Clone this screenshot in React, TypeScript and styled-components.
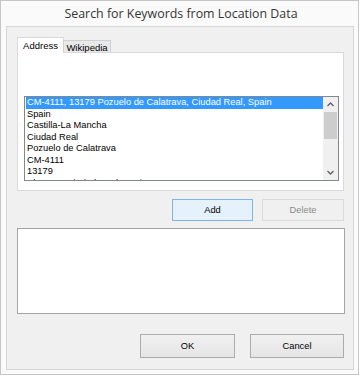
import React from 'react';
import styled, { createGlobalStyle, css } from 'styled-components';

const GlobalStyle = createGlobalStyle`
    body{
        margin:0;
        background:#ffffff;
        font-family:"Liberation Sans", Arial, sans-serif;
    }
`

const Window = styled.div`
    box-sizing:border-box;
    width:359px;
    height:375px;
    border:1px solid #c6c6c6;
    background:#fafafa;
    padding:0 4px 4px 5px;
    display:flex;
    flex-direction:column;
`

const TitleBar = styled.div`
    height:25px;
    display:flex;
    align-items:center;
    justify-content:center;
    font-family:"Open Sans", "Noto Sans", sans-serif;
    font-size:12.4px;
    color:#353535;
    padding-left:2px;
`

const Client = styled.div`
    box-sizing:border-box;
    flex:1;
    border:1px solid #d6d6d6;
    background:#f0f0f0;
    padding:10px 9px 0 10px;
    display:flex;
    flex-direction:column;
`

const TabStrip = styled.div`
    height:15px;
    display:flex;
    align-items:flex-end;
    position:relative;
    z-index:1;
`

const Tab = styled.div<{ $active?: boolean }>`
    box-sizing:border-box;
    display:flex;
    align-items:center;
    justify-content:center;
    font-size:9.5px;
    color:#000;
    border:1px solid #d9d9d9;
    border-bottom:none;
    ${(p) => p.$active ? css`
        width:47px;
        height:16px;
        margin-bottom:-1px;
        background:#ffffff;
        padding-bottom:1px;
    ` : css`
        width:48px;
        height:12px;
        margin-left:-1px;
        background:#e9e9e9;
        border-color:#cfcfcf;
        padding-top:1px;
    `}
`

const TabPanel = styled.div`
    box-sizing:border-box;
    width:327px;
    height:139px;
    border:1px solid #d9d9d9;
    background:#ffffff;
    padding:43px 4px 9px 6px;
`

const ListBox = styled.div`
    box-sizing:border-box;
    width:315px;
    height:85px;
    border:1px solid #828790;
    background:#ffffff;
    display:flex;
`

const ListItems = styled.div`
    flex:1;
    padding-left:1px;
    overflow:hidden;
`

const Item = styled.div<{ $selected?: boolean }>`
    height:11.5px;
    line-height:11.5px;
    font-size:9.3px;
    padding-left:1px;
    white-space:nowrap;
    color:${(p) => p.$selected ? '#ffffff' : '#000000'};
    background:${(p) => p.$selected ? '#3399ff' : 'transparent'};
`

const ScrollBar = styled.div`
    width:15px;
    background:#f0f0f0;
    display:flex;
    flex-direction:column;
`

const ScrollArrow = styled.div`
    height:15px;
    display:flex;
    align-items:center;
    justify-content:center;
`

const ScrollTrack = styled.div`
    flex:1;
`

const ScrollThumb = styled.div`
    height:27px;
    margin:0 1px;
    background:#cdcdcd;
`

const ButtonRow = styled.div<{ $top: number; $gap: number }>`
    display:flex;
    justify-content:flex-end;
    gap:${(p) => p.$gap}px;
    width:327px;
    margin-top:${(p) => p.$top}px;
`

const Button = styled.div<{ $kind?: 'default' | 'disabled' | 'normal'; $w: number; $h: number }>`
    box-sizing:border-box;
    width:${(p) => p.$w}px;
    height:${(p) => p.$h}px;
    display:flex;
    align-items:center;
    justify-content:center;
    font-size:9.3px;
    border:1px solid #adadad;
    background:#e1e1e1;
    color:#000;
    ${(p) => p.$kind === 'default' && css`
        border-color:#7eb4ea;
        background:#e5f1fb;
    `}
    ${(p) => p.$kind === 'disabled' && css`
        border-color:#dadada;
        background:#f0f0f0;
        color:#8a8a8a;
    `}
    ${(p) => p.$kind === 'normal' && css`
        border-color:#acacac;
        background:linear-gradient(#f0f0f0, #e5e5e5);
    `}
`

const MultiBox = styled.div`
    box-sizing:border-box;
    width:328px;
    height:86px;
    margin-top:7px;
    border:1px solid #a5a5a5;
    background:#ffffff;
`

const Chevron = ({ up }: { up?: boolean }) => (
    <svg width="7" height="5" viewBox="0 0 7 5">
        <polyline
            points={up ? '0.5,4 3.5,1 6.5,4' : '0.5,1 3.5,4 6.5,1'}
            fill="none"
            stroke="#606060"
            strokeWidth="1.3"
        />
    </svg>
)

const items = [
    'CM-4111, 13179 Pozuelo de Calatrava, Ciudad Real, Spain',
    'Spain',
    'Castilla-La Mancha',
    'Ciudad Real',
    'Pozuelo de Calatrava',
    'CM-4111',
    '13179',
    'Almagro, Ciudad Real, Spain',
]

export default function App() {
    return (
        <>
            <GlobalStyle />
            <Window>
                <TitleBar>Search for Keywords from Location Data</TitleBar>
                <Client>
                    <TabStrip>
                        <Tab $active>Address</Tab>
                        <Tab>Wikipedia</Tab>
                    </TabStrip>
                    <TabPanel>
                        <ListBox>
                            <ListItems>
                                {items.map((it, i) => (
                                    <Item key={i} $selected={i === 0}>{it}</Item>
                                ))}
                            </ListItems>
                            <ScrollBar>
                                <ScrollArrow><Chevron up /></ScrollArrow>
                                <ScrollTrack>
                                    <ScrollThumb />
                                </ScrollTrack>
                                <ScrollArrow><Chevron /></ScrollArrow>
                            </ScrollBar>
                        </ListBox>
                    </TabPanel>
                    <ButtonRow $top={8} $gap={9}>
                        <Button $kind="default" $w={81} $h={22}>Add</Button>
                        <Button $kind="disabled" $w={82} $h={22}>Delete</Button>
                    </ButtonRow>
                    <MultiBox />
                    <ButtonRow $top={20} $gap={15}>
                        <Button $kind="normal" $w={95} $h={24}>OK</Button>
                        <Button $kind="normal" $w={94} $h={24}>Cancel</Button>
                    </ButtonRow>
                </Client>
            </Window>
        </>
    )
}
